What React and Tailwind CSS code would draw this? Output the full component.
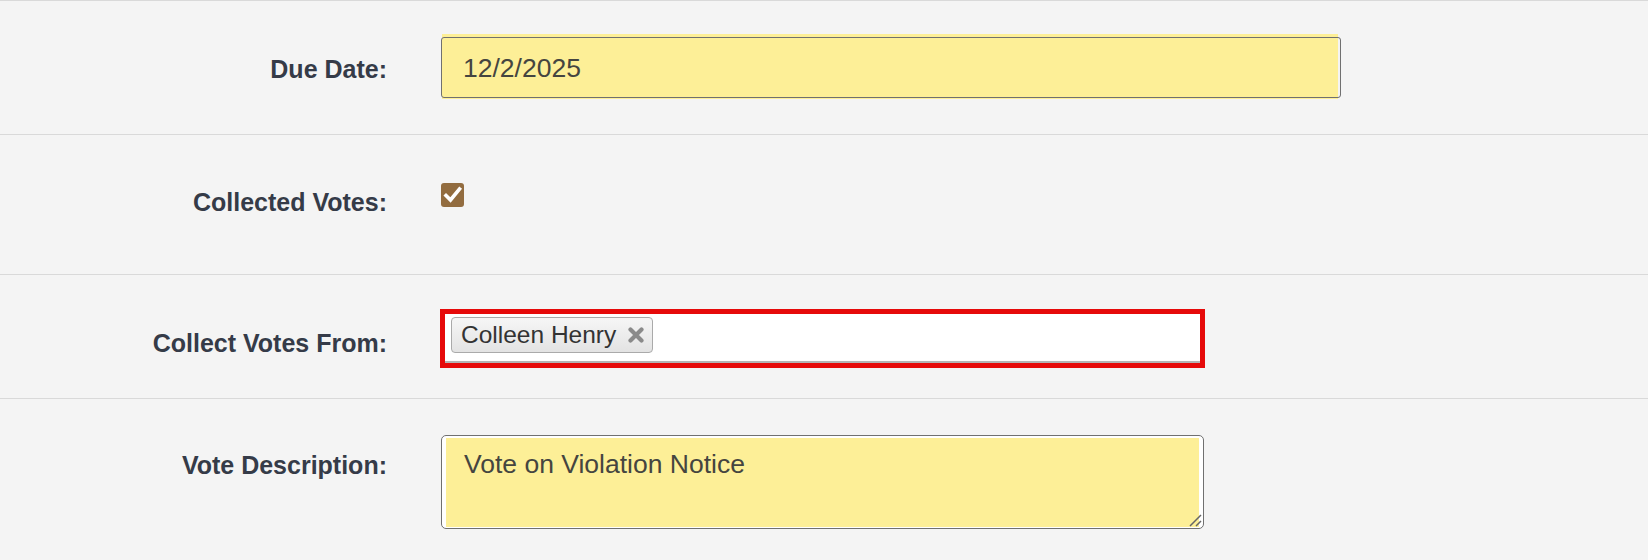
import React from 'react';

const labelFont = { fontFamily: '"Liberation Sans", Arial, sans-serif' };

function Label({ children, className = '' }) {
  return (
    <div
      className={`w-[387px] shrink-0 text-right text-[25px] font-bold leading-[30px] text-[#353b48] ${className}`}
      style={labelFont}
    >
      {children}
    </div>
  );
}

function CheckedBox() {
  return (
    <div className="flex h-[24px] w-[23px] items-center justify-center rounded-[3px] bg-[#926c3f]">
      <svg width="23" height="24" viewBox="0 0 23 24">
        <polyline points="5,12.5 9.5,17 18.5,6" fill="none" stroke="#ffffff" strokeWidth="3.6" strokeLinecap="square" />
      </svg>
    </div>
  );
}

function Chip({ name }) {
  return (
    <div className="flex h-[36px] items-center rounded-[4px] border border-[#aaaaaa] bg-gradient-to-b from-[#f6f6f6] to-[#e3e3e3] pl-[9px] pr-[8px]">
      <span className="text-[24.5px] leading-[30px] text-[#333333]">{name}</span>
      <svg className="ml-[12px]" width="16" height="16" viewBox="0 0 16 16">
        <path d="M2.5 2.5 L13.5 13.5 M13.5 2.5 L2.5 13.5" stroke="#8a8a8a" strokeWidth="4.2" strokeLinecap="round" />
      </svg>
    </div>
  );
}

export default function App() {
  return (
    <div className="min-h-[560px] w-[1648px] bg-[#f4f4f4]" style={labelFont}>
      {/* Due Date */}
      <div className="flex h-[134px] border-t border-[#d9d9d9] pt-[36px]">
        <Label className="mt-[17px]">Due Date:</Label>
        <div className="ml-[54px]">
          <div className="relative h-[61px] w-[900px]">
            <div className="absolute -top-[3px] -bottom-[1px] left-[1px] right-[3px] bg-[#fdef97]" />
            <div className="relative flex h-full items-center rounded-[3px] border border-[#707070] pl-[21px] text-[26.5px] leading-[30px] text-[#454540]">
              12/2/2025
            </div>
          </div>
        </div>
      </div>

      {/* Collected Votes */}
      <div className="flex h-[140px] border-t border-[#d9d9d9] pt-[48px]">
        <Label className="mt-[4px]">Collected Votes:</Label>
        <div className="ml-[54px]">
          <CheckedBox />
        </div>
      </div>

      {/* Collect Votes From */}
      <div className="flex h-[124px] border-t border-[#d9d9d9] pt-[34px]">
        <Label className="mt-[19px]">Collect Votes From:</Label>
        <div className="ml-[53px]">
          <div className="h-[59px] w-[765px] border-[5px] border-[#e60a0a]">
            <div className="flex h-full items-start border-b-2 border-[#b4b4b4] bg-white pl-[6px] pt-[3px]">
              <Chip name="Colleen Henry" />
            </div>
          </div>
        </div>
      </div>

      {/* Vote Description */}
      <div className="flex h-[162px] border-t border-[#d9d9d9] pt-[36px]">
        <Label className="mt-[15px]">Vote Description:</Label>
        <div className="ml-[54px]">
          <div className="relative h-[94px] w-[763px] rounded-[5px] border border-[#707070] bg-white px-[4px] pb-[1px] pt-[2px]">
            <div className="h-full bg-[#fdef97] pl-[18px] pt-[11px] text-[26.5px] leading-[30px] text-[#454540]">
              Vote on Violation Notice
            </div>
            <svg className="absolute bottom-[1px] right-[1px]" width="14" height="14" viewBox="0 0 14 14">
              <path d="M2 13 L13 2 M8 13 L13 8" stroke="#666666" strokeWidth="1.5" />
            </svg>
          </div>
        </div>
      </div>
    </div>
  );
}
